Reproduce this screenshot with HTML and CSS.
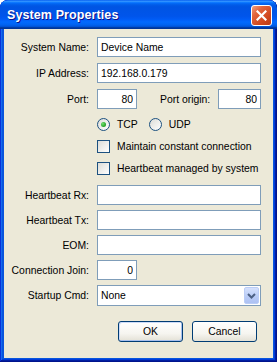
FILE: index.html
```html
<!DOCTYPE html>
<html lang="en">
<head>
    <meta charset="UTF-8">
    <meta name="viewport" content="width=device-width, initial-scale=1.0">
    <title>System Properties</title>
    <link rel="stylesheet" href="styles.css">
</head>
<body>
    <div class="window">
        <div class="titlebar">
            <span class="title">System Properties</span>
            <button class="close" type="button" aria-label="Close">
                <svg width="11" height="11" viewBox="0 0 11 11">
                    <path d="M1.5 1.5 L9.5 9.5 M9.5 1.5 L1.5 9.5" stroke="#fff" stroke-width="2.2" stroke-linecap="square"/>
                </svg>
            </button>
        </div>

        <div class="client">
            <form class="form">
                <div class="fields">
                    <div class="row">
                        <label class="lbl" for="sysName">System Name:</label>
                        <input class="text" id="sysName" value="Device Name">
                    </div>
                    <div class="row">
                        <label class="lbl" for="ipAddr">IP Address:</label>
                        <input class="text" id="ipAddr" value="192.168.0.179">
                    </div>
                    <div class="row">
                        <label class="lbl" for="port">Port:</label>
                        <div class="port-line">
                            <input class="text num short" id="port" value="80">
                            <label class="origin-lbl" for="portOrigin">Port origin:</label>
                            <input class="text num origin" id="portOrigin" value="80">
                        </div>
                    </div>
                </div>

                <div class="options">
                    <div class="opt-row">
                        <span class="opt"><span class="radio checked"></span>TCP</span>
                        <span class="opt udp"><span class="radio"></span>UDP</span>
                    </div>
                    <div class="opt-row">
                        <span class="opt"><span class="check"></span>Maintain constant connection</span>
                    </div>
                    <div class="opt-row">
                        <span class="opt"><span class="check"></span>Heartbeat managed by system</span>
                    </div>
                </div>

                <div class="fields lower">
                    <div class="row">
                        <label class="lbl" for="hbRx">Heartbeat Rx:</label>
                        <input class="text" id="hbRx" value="">
                    </div>
                    <div class="row">
                        <label class="lbl" for="hbTx">Heartbeat Tx:</label>
                        <input class="text" id="hbTx" value="">
                    </div>
                    <div class="row">
                        <label class="lbl" for="eom">EOM:</label>
                        <input class="text" id="eom" value="">
                    </div>
                    <div class="row">
                        <label class="lbl" for="connJoin">Connection Join:</label>
                        <div><input class="text num short" id="connJoin" value="0"></div>
                    </div>
                    <div class="row tall">
                        <span class="lbl">Startup Cmd:</span>
                        <div class="select">
                            <span class="select-value">None</span>
                            <span class="drop">
                                <svg width="9" height="6" viewBox="0 0 9 6">
                                    <path d="M1 1 L4.5 4.5 L8 1" fill="none" stroke="#4d6185" stroke-width="2"/>
                                </svg>
                            </span>
                        </div>
                    </div>
                </div>

                <div class="buttons">
                    <button class="btn default" type="submit">OK</button>
                    <button class="btn" type="button">Cancel</button>
                </div>
            </form>
        </div>
    </div>
</body>
</html>
```

FILE: styles.css
```css
body {
    margin: 0;
    padding: 0;
    background-color: #fff;
    font-family: "Liberation Sans", Arial, sans-serif;
}
.window {
    width: 277px;
    height: 362px;
    display: flex;
    flex-direction: column;
    background-color: #0855dd;
    border-radius: 8px 8px 0 0;
    box-shadow: inset -1px -1px #00138c, inset 1px 1px #0831d9,
                inset -2px -2px #001ea0, inset 2px 2px #166aee,
                inset -3px -3px #003bda, inset 3px 3px #0855dd;
    overflow: hidden;
}
.titlebar {
    height: 29px;
    flex: none;
    display: flex;
    align-items: center;
    justify-content: space-between;
    padding: 0 5px 0 7px;
    border-radius: 8px 8px 0 0;
    background: linear-gradient(to bottom, #0058ee 0%, #3593ff 4%, #288eff 6%, #127dff 8%,
                #036ffc 10%, #0262ee 14%, #0057e5 20%, #0054e3 24%, #0055eb 56%,
                #005bf5 66%, #026afe 76%, #0062ef 86%, #0052d6 92%, #0040ab 94%, #003092 100%);
}
.title {
    color: white;
    font-weight: bold;
    font-size: 12.5px;
    letter-spacing: 0.1px;
    text-shadow: 1px 1px #0f1089;
    padding-top: 1px;
}
.close {
    width: 21px;
    height: 21px;
    padding: 0;
    margin-top: 1px;
    display: flex;
    align-items: center;
    justify-content: center;
    border: 1px solid #fff;
    border-radius: 3px;
    background: radial-gradient(circle at 90% 90%, #cc4600 0%, #dc6527 55%, #cd7546 70%, #ffccb2 90%, #fff 100%);
    background: linear-gradient(135deg, #f0a080 0%, #e2643c 30%, #d0461d 70%, #b83a17 100%);
}
.client {
    flex: 1;
    margin: 0 4px 4px 4px;
    background-color: #ece9d8;
    font-size: 10.4px;
    color: #000;
}
.form {
    padding: 8px 12px 0 0;
}
.fields {
    display: flex;
    flex-direction: column;
    gap: 6px;
}
.fields.lower {
    gap: 5px;
    margin-top: 6px;
}
.row {
    display: grid;
    grid-template-columns: 85px 164px;
    column-gap: 8px;
    align-items: center;
    height: 20px;
}
.row.tall {
    height: 21px;
}
.lbl {
    text-align: right;
    white-space: nowrap;
}
.text {
    box-sizing: border-box;
    width: 100%;
    height: 20px;
    margin: 0;
    padding: 0 3px;
    border: 1px solid #7f9db9;
    background: #fff;
    font-family: inherit;
    font-size: 10.4px;
    color: #000;
    outline: none;
}
.num {
    text-align: right;
}
.short {
    width: 40px;
}
.port-line {
    display: flex;
    align-items: center;
}
.origin-lbl {
    margin-left: 23px;
}
.origin {
    width: 43px;
    margin-left: auto;
}
.options {
    margin-top: 4px;
    padding-left: 93px;
}
.opt-row {
    height: 22px;
    display: flex;
    align-items: center;
}
.opt {
    display: flex;
    align-items: center;
    gap: 7px;
}
.opt.udp {
    margin-left: 11px;
}
.radio {
    box-sizing: border-box;
    width: 13px;
    height: 13px;
    border: 1px solid #1c5180;
    border-radius: 50%;
    background: linear-gradient(135deg, #dcdcd7 0%, #fff 100%);
    display: flex;
    align-items: center;
    justify-content: center;
}
.radio.checked::after {
    content: "";
    width: 5px;
    height: 5px;
    border-radius: 50%;
    background: radial-gradient(circle at 35% 35%, #6fe06f 0%, #2ea72e 60%, #1a861a 100%);
}
.check {
    box-sizing: border-box;
    width: 13px;
    height: 13px;
    border: 1px solid #1c5180;
    background: linear-gradient(135deg, #dcdcd7 0%, #fff 100%);
}
.select {
    box-sizing: border-box;
    height: 21px;
    border: 1px solid #7f9db9;
    background: #fff;
    display: flex;
    align-items: center;
    justify-content: space-between;
    padding: 1px;
}
.select-value {
    padding-left: 2px;
}
.drop {
    box-sizing: border-box;
    width: 15px;
    height: 17px;
    display: flex;
    align-items: center;
    justify-content: center;
    border: 1px solid #bbcdf6;
    border-radius: 2px;
    background: linear-gradient(to bottom, #d5e1fd 0%, #b8cbf6 60%, #aec2f3 100%);
}
.buttons {
    display: flex;
    justify-content: flex-end;
    gap: 9px;
    margin-top: 15px;
    padding-right: 4px;
}
.btn {
    box-sizing: border-box;
    width: 65px;
    height: 21px;
    padding: 0;
    border: 1px solid #003c74;
    border-radius: 3px;
    background: linear-gradient(to bottom, #fff 0%, #f6f5f0 60%, #e3e1d6 100%);
    font-family: inherit;
    font-size: 10.4px;
    color: #000;
}
.btn.default {
    box-shadow: inset -1px -1px #a8c0ee, inset 1px 1px #cedcf8;
}
```
